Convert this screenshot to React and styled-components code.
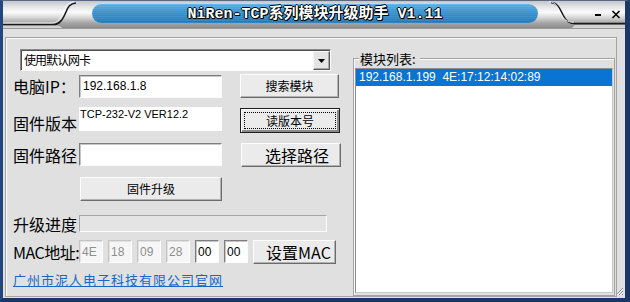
import React from 'react';
import styled, { createGlobalStyle } from 'styled-components';

const Global = createGlobalStyle`
  html, body { margin: 0; padding: 0; background: #1b3766; }
  body { font-family: "Liberation Sans", "Noto Sans CJK SC", sans-serif; }
`;

const CJK = `"Noto Sans CJK SC", "Liberation Sans", sans-serif`;
const LAT = `"Liberation Sans", "Noto Sans CJK SC", sans-serif`;

const Window = styled.div`
  width: 630px;
  height: 302px;
  box-sizing: border-box;
  display: flex;
  flex-direction: column;
  background: #e0e0e0;
  border-top: 1px solid #5b6a80;
  border-left: 3px solid #23467f;
  border-right: 5px solid #1b3766;
  border-bottom: 4px solid #1b3766;
  overflow: hidden;
`;

const TitleBar = styled.div`
  height: 27px;
  flex: none;
  display: flex;
  background: linear-gradient(
    to bottom,
    #c4c6ca 0%,
    #e2e3e5 20%,
    #fbfbfb 42%,
    #d9d9d9 60%,
    #a4a4a4 82%,
    #8c8c8c 100%
  );
`;

const Cap = styled.svg`
  display: block;
  flex: none;
`;

const Pill = styled.div`
  flex: 1;
  margin: 3px 0 5px;
  border-radius: 10px;
  display: flex;
  align-items: center;
  justify-content: center;
  background:
    repeating-linear-gradient(to bottom, rgba(255, 255, 255, 0.09) 0 1px, transparent 1px 2px),
    linear-gradient(to bottom, #5cb0e4 0%, #3a95d1 35%, #2c88c8 70%, #1f76b6 100%);
`;

const Title = styled.span`
  font: bold 15px/1 "Liberation Mono", "Noto Sans CJK SC", monospace;
  color: #fff;
  white-space: nowrap;
  margin-top: 1px;
  text-shadow: 1px 0 0 #000, -1px 0 0 #000, 0 1px 0 #000, 0 -1px 0 #000, 1px 1px 0 #000;
`;

const Client = styled.div`
  flex: 1;
  position: relative;
  border-top: 1px solid #9c9c9c;
  padding: 8px 8px 1px 2px;
  box-sizing: border-box;
  display: flex;
`;

const Frame = styled.div`
  flex: 1;
  box-sizing: border-box;
  border: 1px solid #a3a3a3;
  box-shadow: inset 1px 1px 0 #fafafa;
  display: grid;
  grid-template-columns: 347px 262px;
`;

const LeftPane = styled.div`
  display: flex;
  flex-direction: column;
  padding: 11px 0 0 7px;
`;

const Combo = styled.div`
  margin-left: 7px;
  width: 311px;
  height: 22px;
  box-sizing: border-box;
  display: flex;
  background: #fff;
  border: 1px solid;
  border-color: #8a8a8a #fbfbfb #fbfbfb #8a8a8a;
  box-shadow: inset 1px 1px 0 #505050;
`;

const ComboText = styled.div`
  flex: 1;
  display: flex;
  align-items: center;
  padding-left: 3px;
  font: 12px/1 ${CJK};
  letter-spacing: -1px;
  color: #000;
`;

const ComboButton = styled.div`
  width: 17px;
  box-sizing: border-box;
  margin: 1px 0 0 0;
  display: flex;
  align-items: center;
  justify-content: center;
  background: #e4e4e4;
  border: 1px solid;
  border-color: #f6f6f6 #5a5a5a #5a5a5a #f6f6f6;
  box-shadow: inset -1px -1px 0 #a8a8a8;
`;

const Row = styled.div`
  display: flex;
  align-items: ${p => p.$align || 'center'};
  height: ${p => p.$h}px;
  margin-top: ${p => p.$mt}px;
`;

const Label = styled.div`
  width: 66px;
  flex: none;
  font: 16px/1 ${CJK};
  color: #000;
  white-space: nowrap;
  letter-spacing: ${p => p.$ls || 0}px;
  margin-top: ${p => p.$dy || 0}px;
`;

const Field = styled.div`
  box-sizing: border-box;
  flex: none;
  width: ${p => p.$w}px;
  height: ${p => p.$h}px;
  margin-left: ${p => p.$ml || 0}px;
  display: flex;
  align-items: center;
  padding-left: ${p => p.$pl ?? 3}px;
  background: ${p => (p.$disabled ? '#f6f6f6' : '#fff')};
  border: 1px solid;
  border-color: ${p => (p.$disabled ? '#c4c4c4 #fff #fff #c4c4c4' : '#7e7e7e #fbfbfb #fbfbfb #7e7e7e')};
  box-shadow: inset 1px 1px 0 ${p => (p.$disabled ? '#e2e2e2' : '#c6c6c6')};
  font: 12px/1 ${LAT};
  color: ${p => (p.$disabled ? '#8e8e8e' : '#000')};
`;

const VersionBox = styled.div`
  box-sizing: border-box;
  width: 143px;
  height: 24px;
  background: #fff;
  padding: 1px 0 0 1px;
  font: 11px/13px ${LAT};
  color: #000;
  white-space: nowrap;
`;

const Progress = styled.div`
  box-sizing: border-box;
  width: 248px;
  height: 17px;
  background: #e4e4e4;
  border: 1px solid;
  border-color: #a6a6a6 #fbfbfb #fbfbfb #a6a6a6;
`;

const Button = styled.button`
  all: unset;
  box-sizing: border-box;
  flex: none;
  position: relative;
  width: ${p => p.$w}px;
  height: ${p => p.$h}px;
  margin-left: ${p => p.$ml || 0}px;
  display: flex;
  align-items: center;
  justify-content: center;
  padding-left: ${p => p.$indent || 0}px;
  background: #ebebeb;
  border: 1px solid;
  border-color: ${p => (p.$focused ? '#1e1e1e' : '#fdfdfd #6c6c6c #6c6c6c #fdfdfd')};
  box-shadow: ${p =>
    p.$focused
      ? 'inset 1px 1px 0 #fdfdfd, inset -2px -2px 0 #8a8a8a'
      : 'inset -1px -1px 0 #b2b2b2'};
  font: ${p => p.$fs || 12}px/1 ${CJK};
  color: #000;
  white-space: nowrap;

  &::after {
    content: '';
    display: ${p => (p.$focused ? 'block' : 'none')};
    position: absolute;
    inset: 3px;
    border: 1px dotted #000;
  }
`;

const MacBoxes = styled.div`
  display: flex;
  gap: 5px;
`;

const Link = styled.a`
  font: 13px/1 ${CJK};
  letter-spacing: 1px;
  color: #1468c6;
  text-decoration: underline;
  white-space: nowrap;
`;

const GroupBox = styled.div`
  position: relative;
  margin-top: 20px;
  box-sizing: border-box;
  border: 1px solid #a3a3a3;
  box-shadow: inset 1px 1px 0 #fafafa;
  padding: 9px 1px 2px 1px;
  display: flex;
`;

const Legend = styled.span`
  position: absolute;
  top: -9px;
  left: 5px;
  padding: 0 4px 0 1px;
  background: #e0e0e0;
  font: 13px/17px ${CJK};
  color: #000;
`;

const ListBox = styled.div`
  flex: 1;
  box-sizing: border-box;
  background: #fff;
  border: 1px solid;
  border-color: #8e8e8e #c8c8c8 #c8c8c8 #8e8e8e;
`;

const ListItem = styled.div`
  height: 17px;
  padding-left: 3px;
  background: ${p => (p.$selected ? '#0a74d4' : 'transparent')};
  color: ${p => (p.$selected ? '#fff' : '#000')};
  font: 12px/17px ${LAT};
  white-space: pre;
`;

const Grip = styled.svg`
  position: absolute;
  right: 2px;
  bottom: 2px;
`;

const macs = [
  { v: '4E', d: true },
  { v: '18', d: true },
  { v: '09', d: true },
  { v: '28', d: true },
  { v: '00', d: false },
  { v: '00', d: false },
];

export default function App() {
  return (
    <>
      <Global />
      <Window>
        <TitleBar>
          <Cap width="89" height="27" viewBox="0 0 89 27">
            <path d="M0,24.6 H51 C56,24.6 58,25.5 59,27 H0 Z" fill="#d2d2d2" />
            <path
              d="M0,23.5 H50 C57,23.5 60,18 63,11 C65,6 67,2.5 73,2"
              fill="none"
              stroke="#1a1a1a"
              strokeWidth="1.6"
            />
            <path
              d="M0,22 H49 C55,22 58,17 61,10 C63,5 65,1.2 71,0.8"
              fill="none"
              stroke="#ffffff"
              strokeWidth="1"
              opacity="0.8"
            />
          </Cap>
          <Pill>
            <Title>NiRen-TCP系列模块升级助手 V1.11</Title>
          </Pill>
          <Cap width="87" height="27" viewBox="0 0 87 27">
            <path d="M38,23.6 H87 V27 H34 C36,25 37,24 38,23.6 Z" fill="#d2d2d2" />
            <path
              d="M13,1.5 C20,2 22,8 25,14 C28,20 31,22.6 38,22.6 H87"
              fill="none"
              stroke="#1a1a1a"
              strokeWidth="1.6"
            />
            <path
              d="M11,0.5 C18,1 20,7 23,13 C26,19 29,21.2 36,21.2"
              fill="none"
              stroke="#ffffff"
              strokeWidth="1"
              opacity="0.8"
            />
            <rect x="57" y="13" width="6" height="2" fill="#000" />
            <path d="M74.5,10 L81.5,17 M81.5,10 L74.5,17" stroke="#000" strokeWidth="1.6" />
          </Cap>
        </TitleBar>
        <Client>
          <Frame>
            <LeftPane>
              <Combo>
                <ComboText>使用默认网卡</ComboText>
                <ComboButton>
                  <svg width="7" height="4" viewBox="0 0 7 4">
                    <path d="M0,0 H7 L3.5,4 Z" fill="#000" />
                  </svg>
                </ComboButton>
              </Combo>

              <Row $mt={3} $h={24}>
                <Label>电脑IP：</Label>
                <Field $w={143} $h={23}>192.168.1.8</Field>
                <Button $ml={18} $w={99} $h={24}>搜索模块</Button>
              </Row>

              <Row $mt={9} $h={26} $align="flex-start">
                <Label $dy={8}>固件版本</Label>
                <VersionBox>TCP-232-V2 VER12.2</VersionBox>
                <Button $ml={18} $w={100} $h={25} $focused style={{ marginTop: 1 }}>
                  读版本号
                </Button>
              </Row>

              <Row $mt={9} $h={25}>
                <Label>固件路径</Label>
                <Field $w={143} $h={23} />
                <Button $ml={19} $w={100} $h={24} $fs={16} $indent={12}>
                  选择路径
                </Button>
              </Row>

              <Row $mt={10} $h={24}>
                <Button $ml={67} $w={142} $h={24}>固件升级</Button>
              </Row>

              <Row $mt={14} $h={17}>
                <Label>升级进度</Label>
                <Progress />
              </Row>

              <Row $mt={7} $h={25}>
                <Label $ls={-0.5}>MAC地址:</Label>
                <MacBoxes>
                  {macs.map((m, i) => (
                    <Field key={i} $w={24} $h={23} $pl={2} $disabled={m.d}>
                      {m.v}
                    </Field>
                  ))}
                </MacBoxes>
                <Button $ml={5} $w={83} $h={24} $fs={16} $indent={8}>
                  设置MAC
                </Button>
              </Row>

              <Row $mt={6} $h={18}>
                <Link>广州市泥人电子科技有限公司官网</Link>
              </Row>
            </LeftPane>

            <GroupBox>
              <Legend>模块列表:</Legend>
              <ListBox>
                <ListItem $selected>{'192.168.1.199  4E:17:12:14:02:89'}</ListItem>
              </ListBox>
            </GroupBox>
          </Frame>
          <Grip width="6" height="11" viewBox="0 0 6 11">
            <path d="M6,3 L0,9 M6,6 L2,10 M6,9 L5,10" stroke="#888" strokeWidth="1" />
            <path d="M6,4 L0,10 M6,7 L3,10" stroke="#fff" strokeWidth="1" />
          </Grip>
        </Client>
      </Window>
    </>
  );
}
